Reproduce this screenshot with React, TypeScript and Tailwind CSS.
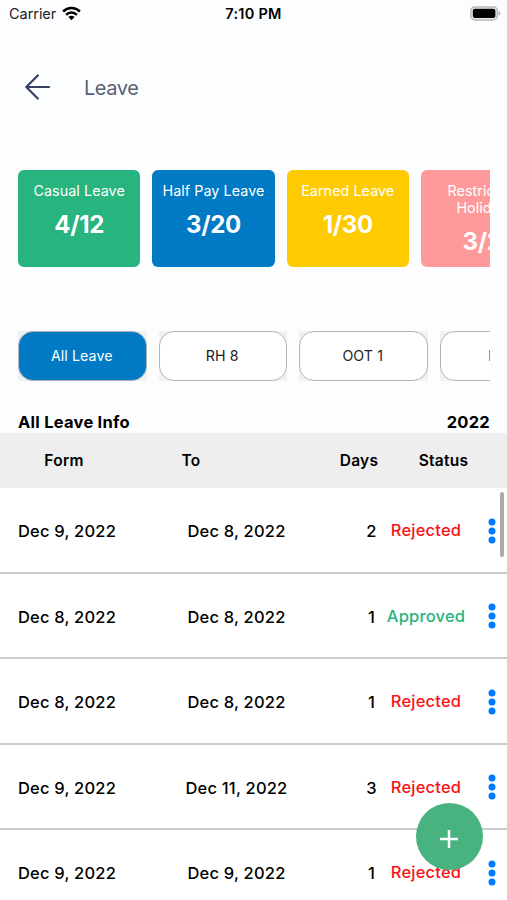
type Leave = { from: string; to: string; days: number; status: 'Rejected' | 'Approved' };

const balances = [
  { label: 'Casual Leave', value: '4/12', color: 'bg-[#27b47e]' },
  { label: 'Half Pay Leave', value: '3/20', color: 'bg-[#007ac4]' },
  { label: 'Earned Leave', value: '1/30', color: 'bg-[#fecb00]' },
  { label: 'Restricted Holiday', value: '3/2', color: 'bg-[#fe9b9a]' },
];

const filters = ['All Leave', 'RH 8', 'OOT 1', 'EL 1'];

const leaves: Leave[] = [
  { from: 'Dec 9, 2022', to: 'Dec 8, 2022', days: 2, status: 'Rejected' },
  { from: 'Dec 8, 2022', to: 'Dec 8, 2022', days: 1, status: 'Approved' },
  { from: 'Dec 8, 2022', to: 'Dec 8, 2022', days: 1, status: 'Rejected' },
  { from: 'Dec 9, 2022', to: 'Dec 11, 2022', days: 3, status: 'Rejected' },
  { from: 'Dec 9, 2022', to: 'Dec 9, 2022', days: 1, status: 'Rejected' },
];

function StatusBar() {
  return (
    <div className="grid h-[27px] shrink-0 grid-cols-[164px_1fr_164px] items-center text-black">
      <div className="flex items-center gap-[6px] pl-[9px]">
        <span className="text-[14.5px] tracking-[-0.05px] text-[#222]">Carrier</span>
        <svg width="19" height="15" viewBox="0 0 19 15" fill="none" stroke="#000" strokeWidth="2.5">
          <path d="M1.1 5.5C5.8 .9 13.2 .9 17.9 5.5" />
          <path d="M4.1 8.8c3-3 7.8-3 10.8 0" />
          <path d="M9.5 14.2 6.4 11.1c1.7-1.7 4.5-1.7 6.2 0Z" fill="#000" stroke="none" />
        </svg>
      </div>
      <span className="text-center text-[14.5px] font-semibold tracking-[0.25px]">7:10 PM</span>
      <svg className="mr-[6px] justify-self-end" width="31" height="15" viewBox="0 0 31 15">
        <rect x="0.9" y="0.9" width="26.4" height="13" rx="4" fill="#eee" stroke="#b8b8b8" strokeWidth="1.5" />
        <rect x="2.8" y="2.8" width="22.6" height="9.2" rx="2" fill="#000" />
        <path d="M28.6 5.2c2.2.7 2.2 3.7 0 4.4Z" fill="#aaa" />
      </svg>
    </div>
  );
}

function Dots() {
  return (
    <svg width="8" height="26" viewBox="0 0 8 26" fill="#007aff">
      <circle cx="4" cy="4" r="3.5" />
      <circle cx="4" cy="13" r="3.5" />
      <circle cx="4" cy="22" r="3.5" />
    </svg>
  );
}

export default function App() {
  return (
    <div className="relative flex h-[900px] w-[507px] flex-col overflow-hidden bg-[#fcfdff] font-[Inter,sans-serif] text-black">
      <StatusBar />
      <header className="flex h-[119px] shrink-0 items-center gap-[34px] pl-[25px] text-[#5b5f72]">
        <svg width="25" height="26" viewBox="0 0 25 26" fill="none" stroke="#394163" strokeWidth="2.2" strokeLinecap="round" strokeLinejoin="round">
          <path d="M24 13H1.5M12.8 1.5 1.3 13l11.5 11.5" />
        </svg>
        <h1 className="mt-[2px] text-[20px] tracking-[-0.45px]">Leave</h1>
      </header>

      <section className="ml-[18px] mt-[23.5px] flex h-[97.5px] w-[472px] shrink-0 gap-[12px] overflow-hidden text-white">
        {balances.map((b) => (
          <div key={b.label} className={`flex w-[122.3px] shrink-0 flex-col items-center rounded-[6px] px-2 pt-[12px] text-center ${b.color}`}>
            <span className="text-[14.3px] leading-[17.5px] tracking-[0.07px]">{b.label}</span>
            <span className="mt-[10.6px] text-[24px] font-bold leading-[30px] tracking-[-0.3px]">{b.value}</span>
          </div>
        ))}
      </section>

      <nav className="ml-[18px] mt-[64px] flex h-[49.5px] w-[472px] shrink-0 gap-[12px] overflow-hidden">
        {filters.map((f, i) => (
          <div key={f} className="w-[128.5px] shrink-0 bg-[#f0f2f2]">
            <button className={`flex h-full w-full items-center justify-center whitespace-nowrap rounded-[15px] border-[1.5px] border-[#b3b5b6] text-[14.2px] tracking-[0.1px] ${i === 0 ? 'bg-[#007ac4] text-white' : 'bg-white text-[#222]'}`}>
              <span className={i === 3 ? 'w-[31px] text-left' : 'pr-[1px]'}>{f}</span>
            </button>
          </div>
        ))}
      </nav>

      <div className="flex h-[52px] shrink-0 items-end justify-between pb-[1px] pl-[18px] pr-[17px] text-[16.5px] font-bold leading-[20px] tracking-[0.25px]">
        <span>All Leave Info</span>
        <span>2022</span>
      </div>

      <div className="grid h-[55.5px] shrink-0 grid-cols-[128px_126px_64px_82px_87px] items-center bg-[#eee] pt-[1px] text-center text-[15.5px] font-semibold tracking-[0.25px]">
        <span>Form</span>
        <span>To</span>
        <span className="col-start-4">Days</span>
        <span>Status</span>
      </div>

      <main className="relative flex-1 overflow-hidden bg-white">
        {leaves.map((l, i) => (
          <div key={i} className="grid h-[85.5px] grid-cols-[134px_205px_45px_84px_1fr] items-center border-b-2 border-[#ccc] pt-[1.5px] text-center text-[16.5px] font-medium tracking-[0.2px]">
            <span className="pt-[2px]">{l.from}</span>
            <span className="pt-[2px]">{l.to}</span>
            <span className="pl-5 pt-[2px]">{l.days}</span>
            <span className={l.status === 'Rejected' ? 'text-[#fa1115]' : 'text-[#27b47e]'}>{l.status}</span>
            <div className="pl-5"><Dots /></div>
          </div>
        ))}
        <div className="absolute right-[3px] top-1 h-[65px] w-1 rounded-full bg-[#aaa]" />
      </main>

      <button className="absolute left-[416px] top-[803px] flex size-[67px] items-center justify-center rounded-full bg-[#49b37f]" aria-label="Add leave">
        <svg className="mr-[2px] mt-[4px]" width="18" height="18" viewBox="0 0 18 18" stroke="#fff" strokeWidth="2.5">
          <path d="M9 0v18M0 9h18" />
        </svg>
      </button>
    </div>
  );
}
